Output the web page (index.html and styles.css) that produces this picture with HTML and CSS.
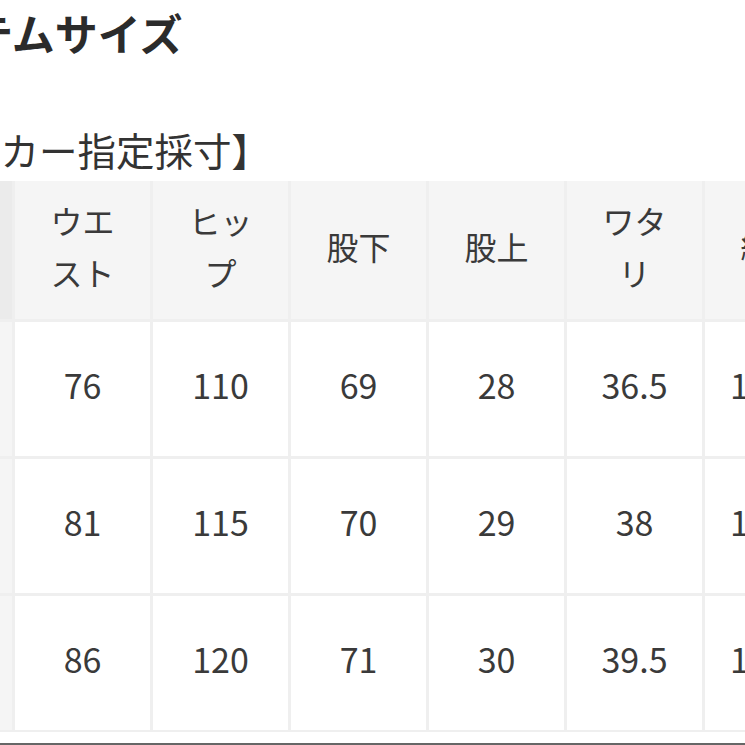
FILE: index.html
```html
<!DOCTYPE html>
<html lang="ja">
<head>
<meta charset="utf-8">
<link rel="stylesheet" href="styles.css">
</head>
<body>
<div class="page">
  <h1 class="title">アイテムサイズ</h1>
  <p class="subtitle">【メーカー指定採寸】</p>
  <div class="size-grid">
    <div class="cell head side"></div>
    <div class="cell head"><span class="head-text">ウエスト</span></div>
    <div class="cell head"><span class="head-text">ヒップ</span></div>
    <div class="cell head"><span class="head-text">股下</span></div>
    <div class="cell head"><span class="head-text">股上</span></div>
    <div class="cell head"><span class="head-text">ワタリ</span></div>
    <div class="cell head"><span class="head-text">総丈</span></div>

    <div class="cell side">S</div>
    <div class="cell num">76</div>
    <div class="cell num">110</div>
    <div class="cell num">69</div>
    <div class="cell num">28</div>
    <div class="cell num">36.5</div>
    <div class="cell num">101.5</div>

    <div class="cell side">M</div>
    <div class="cell num">81</div>
    <div class="cell num">115</div>
    <div class="cell num">70</div>
    <div class="cell num">29</div>
    <div class="cell num">38</div>
    <div class="cell num">103.5</div>

    <div class="cell side">L</div>
    <div class="cell num">86</div>
    <div class="cell num">120</div>
    <div class="cell num">71</div>
    <div class="cell num">30</div>
    <div class="cell num">39.5</div>
    <div class="cell num">105.5</div>
  </div>
  <div class="rule"></div>
</div>
</body>
</html>
```

FILE: styles.css
```css
html, body {
  margin: 0;
  padding: 0;
  background: #ffffff;
}

body {
  font-family: "Noto Sans CJK JP", "Noto Sans", sans-serif;
  color: #3a3a3a;
  overflow: hidden;
  width: 745px;
  height: 745px;
}

.page {
  width: 745px;
}

.title {
  margin: 0 0 0 -113px;
  padding-top: 10px;
  font-size: 43px;
  line-height: 44px;
  font-weight: 700;
  white-space: nowrap;
  color: #2b2b2b;
}

.subtitle {
  margin: 75px 0 0 -115px;
  font-size: 38.5px;
  line-height: 40px;
  font-weight: 400;
  white-space: nowrap;
  color: #333333;
}

.size-grid {
  margin: 12px 0 0 -123px;
  display: grid;
  grid-template-columns: repeat(7, 135px);
  grid-template-rows: 138px 134px 134px 134px;
  gap: 3px;
  background: #efefef;
  width: max-content;
  padding-bottom: 2px;
}

.cell {
  display: flex;
  align-items: center;
  justify-content: center;
  text-align: center;
  background: #ffffff;
}

.cell.head {
  background: #f5f5f5;
  padding: 0 26px 8px;
}

.cell.side {
  background: #f5f5f5;
  color: transparent;
}

.cell.head.side {
  background: #ebebeb;
}

.head-text {
  font-size: 32px;
  line-height: 52px;
  color: #3a3a3a;
}

.num {
  font-size: 34px;
  line-height: 40px;
  padding-bottom: 8px;
  color: #3a3a3a;
}

.rule {
  margin-top: 11px;
  border-top: 2px solid #666666;
  width: 745px;
}
```
